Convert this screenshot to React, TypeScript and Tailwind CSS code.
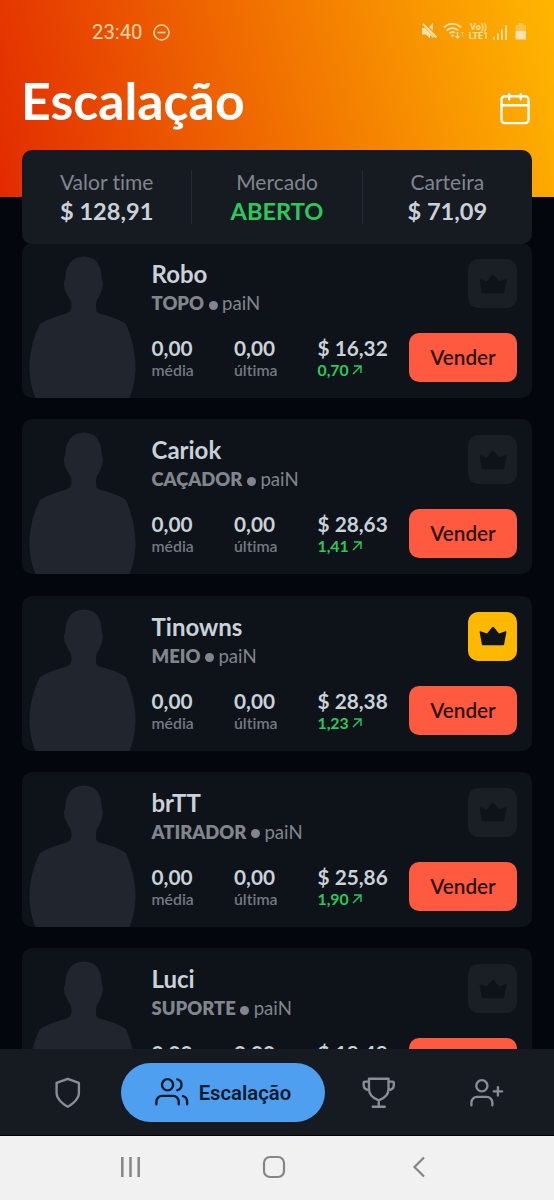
import type { ReactNode } from "react";

type Player = {
	name: string;
	role: string;
	team: string;
	average: string;
	last: string;
	price: string;
	variation: string;
	captain?: boolean;
};

const players: Player[] = [
	{ name: "Robo", role: "TOPO", team: "paiN", average: "0,00", last: "0,00", price: "16,32", variation: "0,70" },
	{ name: "Cariok", role: "CAÇADOR", team: "paiN", average: "0,00", last: "0,00", price: "28,63", variation: "1,41" },
	{ name: "Tinowns", role: "MEIO", team: "paiN", average: "0,00", last: "0,00", price: "28,38", variation: "1,23", captain: true },
	{ name: "brTT", role: "ATIRADOR", team: "paiN", average: "0,00", last: "0,00", price: "25,86", variation: "1,90" },
	{ name: "Luci", role: "SUPORTE", team: "paiN", average: "0,00", last: "0,00", price: "18,48", variation: "0,85" },
];

const StatusBar = () => (
	<div className="flex h-16 items-center justify-between pl-[92px] pr-[27px] font-[Roboto,sans-serif] text-[#ffd9a8]">
		<div className="flex items-center gap-[10px]">
			<span className="text-[20.3px] leading-6">23:40</span>
			<svg width="17" height="17" viewBox="0 0 17 17" fill="none" stroke="currentColor" strokeWidth="1.6">
				<circle cx="8.5" cy="8.5" r="7.5" />
				<path d="M4.5 8.5h8" />
			</svg>
		</div>
		<div className="flex items-center text-[#ffe3ae]">
			<svg className="mb-[2px]" width="17" height="18" viewBox="0 0 17 18" fill="currentColor">
				<path d="M1 6h3l9 9-1 1-3-3v3.500L5 12.500H1zM12 1v7.500L8 5z" />
				<path d="M2 2l13.500 13.500" stroke="currentColor" strokeWidth="1.9" />
			</svg>
			<svg className="ml-[5px] mb-[2px]" width="22" height="18" viewBox="0 0 22 18" fill="none" stroke="currentColor" strokeWidth="1.8">
				<path d="M1 5.500a12 12 0 0 1 17 0M3.700 8.500a8.300 8.300 0 0 1 11.600 0M6.500 11.300a4.500 4.500 0 0 1 5.500-.6" />
				<circle cx="9.500" cy="13.500" r="1.300" fill="currentColor" stroke="none" />
				<path d="M14.500 10v6M12.500 14l2 2 2-2" strokeWidth="1.300" />
				<path d="M19.500 15v-5M18 11.500l1.500-1.500 1.500 1.500" strokeWidth="1" opacity=".5" />
			</svg>
			<div className="ml-[3px] flex w-[21px] flex-col items-center text-[9px] leading-[9px] font-bold">
				<span>Vo))</span>
				<span>LTE1</span>
			</div>
			<svg className="ml-[4px]" width="15" height="17" viewBox="0 0 15 17" fill="currentColor">
				<path d="M0 13h1.500v3H0zM4 9.500h1.700V16H4zM8 5.500h1.700V16H8zM12.300 1H14v15h-1.700z" />
			</svg>
			<svg className="ml-[7px]" width="12" height="18" viewBox="0 0 12 18" fill="currentColor">
				<path d="M3.500 0h5v2h2.500v6H.5V2h3z" opacity=".4" />
				<path d="M.5 8H11v8.500H.5z" />
			</svg>
		</div>
	</div>
);

const CalendarIcon = () => (
	<svg width="32" height="34" viewBox="0 0 32 34" fill="none" stroke="currentColor" strokeWidth="2.4" strokeLinecap="round">
		<rect x="2.500" y="5.300" width="27" height="26.800" rx="3.300" />
		<path d="M2.500 14.300h27M10.200 3.200v5M21.800 3.200v5" />
	</svg>
);

const Header = () => (
	<header className="h-[197px] flex-none bg-[linear-gradient(75deg,#e22b00_0%,#ffb600_100%)]">
		<StatusBar />
		<div className="flex items-center justify-between pl-[21px] pr-[23px] text-white">
			<h1 className="text-[51.8px] leading-[73px] font-bold">Escalação</h1>
			<div className="mt-[14px]">
				<CalendarIcon />
			</div>
		</div>
	</header>
);

const SummaryItem = ({ label, children }: { label: string; children: ReactNode }) => (
	<div className="flex flex-1 flex-col items-center">
		<span className="text-[21px] leading-[24px] text-[#81858d]">{label}</span>
		{children}
	</div>
);

const Summary = () => (
	<section className="relative z-10 mx-[22px] -mt-[47px] flex h-[94px] flex-none divide-x divide-[#262a32] rounded-[10px] bg-[#161b22] py-5">
		<SummaryItem label="Valor time">
			<span className="text-[23.6px] leading-[34px] font-bold text-[#c9d1d9]">$ 128,91</span>
		</SummaryItem>
		<SummaryItem label="Mercado">
			<span className="text-[23.6px] leading-[34px] font-bold text-[#2dc85c]">ABERTO</span>
		</SummaryItem>
		<SummaryItem label="Carteira">
			<span className="text-[23.6px] leading-[34px] font-bold text-[#c9d1d9]">$ 71,09</span>
		</SummaryItem>
	</section>
);

const Silhouette = () => (
	<svg className="flex-none text-[#21252d]" width="129.5" height="155" viewBox="0 0 129.5 155" fill="currentColor">
		<path d="M62 13.500C50 13.500 43.500 22 43.300 36c-2 2-1.500 8 .7 13 1.500 5 5 6 5.500 13-.5 6-1 6-4 8-9 3-20 6-27.500 11C12 93 7.500 108 7.500 124c0 12 2.500 23 6 31h94c3.500-8 6-19 6-31 0-16-4.500-31-9.500-43-7.500-5-18-8-27.500-11-3-2-2-2-2.500-8 .5-7 3.500-8 5-13 2.200-5 2.700-11 .7-13-.2-14-5.700-22.500-17.700-22.500z" />
	</svg>
);

const CrownIcon = () => (
	<svg width="28" height="20" viewBox="0 0 28 20" fill="currentColor">
		<path d="M1.500 5.200 8 7.600l4.900-6.200a1.400 1.400 0 0 1 2.200 0L20 7.600l6.500-2.400c.6-.2 1 .2.900.8l-2.300 12.400c-.1.500-.4.800-.9.800H3.800c-.5 0-.8-.3-.9-.8L.6 6c-.1-.6.3-1 .9-.8z" />
	</svg>
);

const Stat = ({ value, label }: { value: string; label: string }) => (
	<div className="flex w-[82.5px] flex-col">
		<span className="text-[20.8px] leading-[24px] font-bold text-[#c9d1d9]">{value}</span>
		<span className="text-[15.8px] leading-[20px] font-semibold text-[#747982]">{label}</span>
	</div>
);

const PlayerCard = ({ player }: { player: Player }) => (
	<article className="flex h-[155px] flex-none overflow-hidden rounded-[10px] bg-[#0e1319]">
		<Silhouette />
		<div className="flex flex-1 flex-col pr-[15px]">
			<div className="flex h-[90px] justify-between pt-4">
				<div>
					<h2 className="text-[24px] leading-[30px] font-bold text-[#c9d1d9]">{player.name}</h2>
					<p className="flex items-center text-[18.6px] leading-[29px] text-[#81858d]">
						<span className="text-[18.4px] font-extrabold">{player.role}</span>
						<span className="mx-[4.5px] mt-[3px] size-[9px] rounded-full bg-[#81858d]" />
						<span>{player.team}</span>
					</p>
				</div>
				<div
					className={
						player.captain
							? "flex size-[49px] items-center justify-center rounded-[10px] bg-[#ffb800] text-[#0e1319]"
							: "flex size-[49px] items-center justify-center rounded-[10px] bg-[#1a1e25] text-[#0e1319]"
					}
				>
					<CrownIcon />
				</div>
			</div>
			<div className="flex">
				<div className="flex flex-1 pt-[3px]">
					<Stat value={player.average} label="média" />
					<Stat value={player.last} label="última" />
					<div className="flex flex-1 flex-col pl-px">
						<span className="text-[20.8px] leading-[24px] font-bold text-[#c9d1d9]">$ {player.price}</span>
						<span className="flex items-center gap-[3px] text-[15.8px] leading-[20px] font-bold text-[#2dc85c]">
							{player.variation}
							<svg width="10" height="10" viewBox="0 0 10 10" fill="none" stroke="currentColor" strokeWidth="1.4">
								<path d="M1 9l8-8M2 1h7v7" />
							</svg>
						</span>
					</div>
				</div>
				<button className="h-[49px] w-[108px] rounded-[10px] bg-[#ff593f] text-[20.7px] font-semibold text-[#2b1413]">
					Vender
				</button>
			</div>
		</div>
	</article>
);

const TabIcon = ({ children }: { children: ReactNode }) => (
	<svg
		width="33.5"
		height="33.5"
		viewBox="0 0 24 24"
		fill="none"
		stroke="currentColor"
		strokeWidth="1.7"
		strokeLinecap="round"
		strokeLinejoin="round"
		overflow="visible"
	>
		{children}
	</svg>
);

const TabBar = () => (
	<nav className="flex h-[86px] flex-none items-center bg-[#161b22] px-[13.5px] text-[#898d96]">
		<button className="flex w-[107.5px] justify-center pt-[2px] pl-px">
			<TabIcon>
				<path d="M12 22s8-4 8-10V5l-8-3-8 3v7c0 6 8 10 8 10z" />
			</TabIcon>
		</button>
		<button className="flex h-[59px] w-[205px] items-center justify-center gap-[10px] rounded-full bg-[#4f9ff0] text-[#0d1a2b]">
			<TabIcon>
				<path d="M17 21v-2a4 4 0 0 0-4-4H5a4 4 0 0 0-4 4v2" />
				<circle cx="9" cy="7" r="4" />
				<path d="M23 21v-2a4 4 0 0 0-3-3.870M16 3.130a4 4 0 0 1 0 7.750" />
			</TabIcon>
			<span className="pt-[2px] font-[Roboto,sans-serif] text-[20.3px] font-semibold">Escalação</span>
		</button>
		<button className="flex w-[107.700px] justify-center pt-[2px]">
			<TabIcon>
				<path d="M5 2h14v7.500c0 4-3 6.500-7 8-4-1.500-7-4-7-8zM12 17.500V22M7.700 22h8.600M5 4H2.200q-1 0-1 1v1.500c0 2 1.200 3.500 4 3.500M19 4h2.800q1 0 1 1v1.500c0 2-1.200 3.500-4 3.500" />
			</TabIcon>
		</button>
		<button className="flex w-[107.700px] justify-center pt-[2px]">
			<TabIcon>
				<path d="M16 21v-2a4 4 0 0 0-4-4H5a4 4 0 0 0-4 4v2" />
				<circle cx="8.500" cy="7" r="4" />
				<path d="M20 8v6M23 11h-6" />
			</TabIcon>
		</button>
	</nav>
);

const SystemBar = () => (
	<div className="flex h-[65px] flex-none items-center border-t border-black bg-[#f1f1f1] pb-[3px] pl-[120px] text-[#858585]">
		<svg width="21" height="22" viewBox="0 0 21 22" fill="none" stroke="currentColor" strokeWidth="2.5">
			<path d="M2.300 1v20M10.500 1v20M18.700 1v20" />
		</svg>
		<svg className="ml-[121px]" width="24" height="24" viewBox="0 0 24 24" fill="none" stroke="currentColor" strokeWidth="2.2">
			<rect x="2" y="2" width="20" height="20" rx="6" />
		</svg>
		<svg className="ml-[126px]" width="14" height="22" viewBox="0 0 14 22" fill="none" stroke="currentColor" strokeWidth="2.2">
			<path d="M12 1.500 2.500 11l9.500 9.500" />
		</svg>
	</div>
);

export default function App() {
	return (
		<div className="flex h-[1200px] w-[554px] flex-col overflow-hidden bg-[#03060d] font-[Lato,sans-serif] [font-variant-ligatures:none]">
			<Header />
			<Summary />
			<main className="-mt-px flex min-h-0 flex-1 flex-col gap-[21.3px] overflow-hidden px-[22px]">
				{players.map(player => (
					<PlayerCard key={player.name} player={player} />
				))}
			</main>
			<TabBar />
			<SystemBar />
		</div>
	);
}
